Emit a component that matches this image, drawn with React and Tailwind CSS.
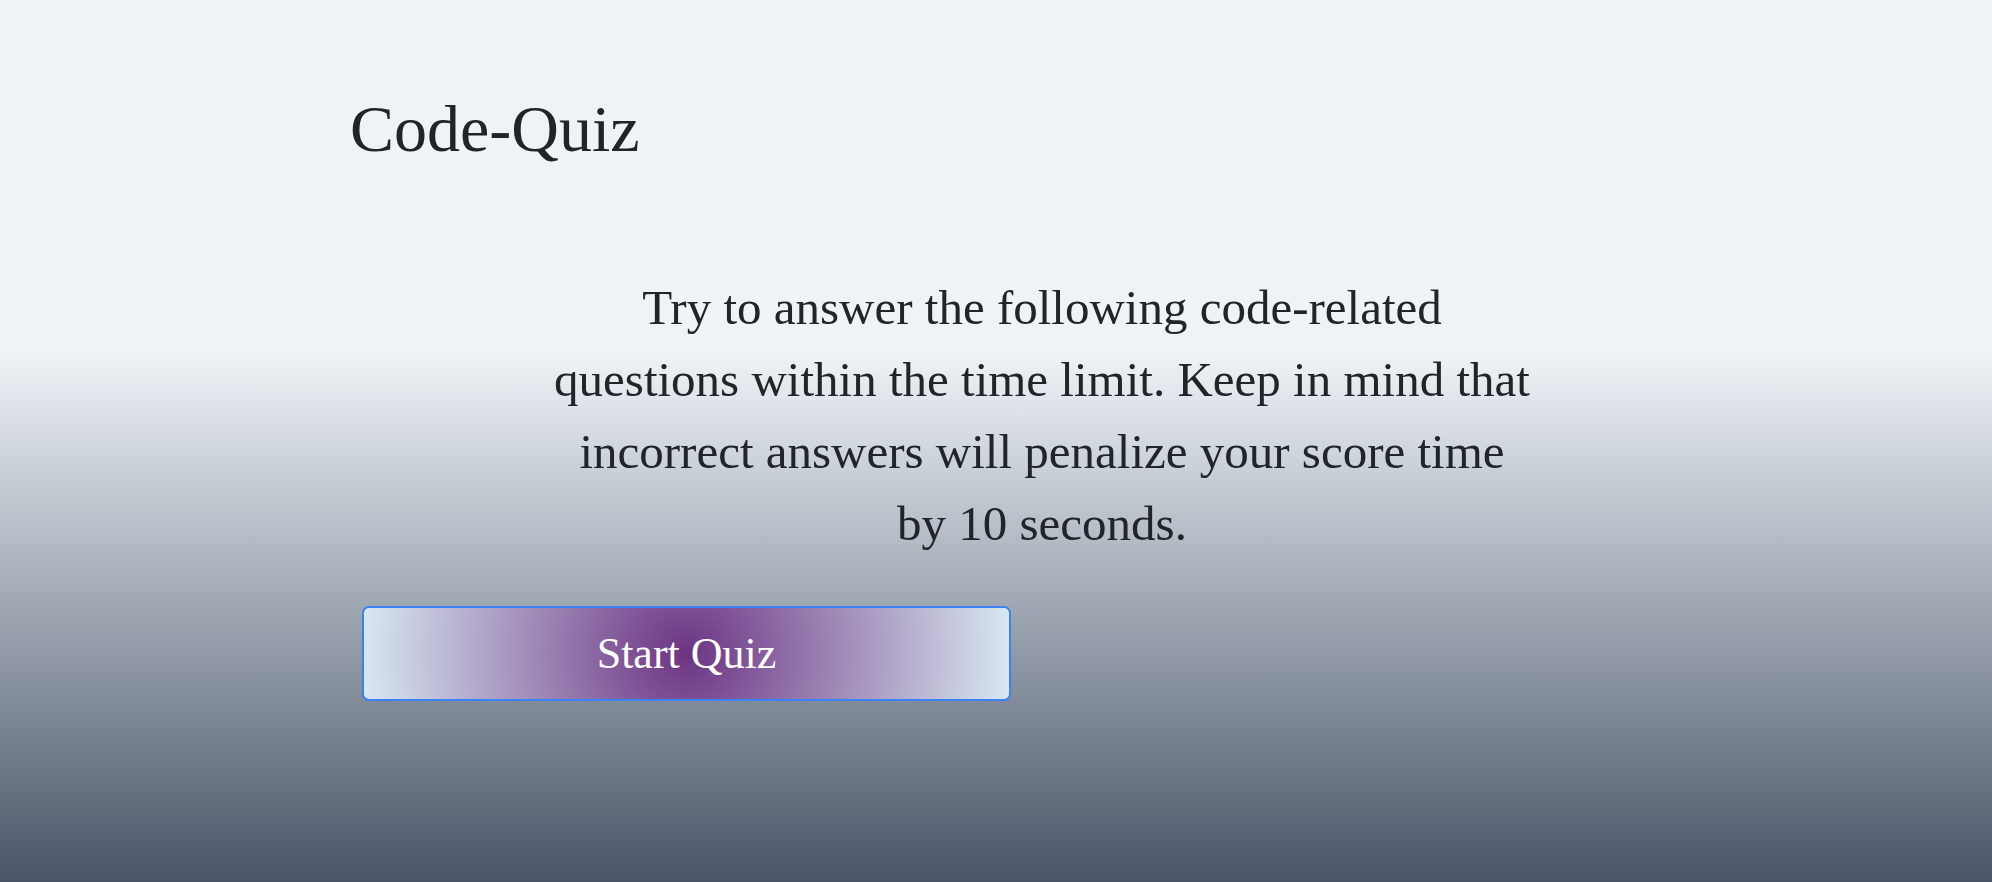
export default function App() {
  return (
    <div className="min-h-screen w-full bg-[linear-gradient(to_bottom,#eef3f7_40%,#4a5568_100%)] font-['Liberation_Serif',serif] text-[#212529]">
      <div className="pl-[350px] pr-[258px] pt-[96px] pb-10">
        <h1 className="text-[66px] leading-none font-normal">Code-Quiz</h1>
        <p className="mt-[110px] text-center text-[49px] leading-[72px]">
          Try to answer the following code-related
          <br />
          questions within the time limit. Keep in mind that
          <br />
          incorrect answers will penalize your score time
          <br />
          by 10 seconds.
        </p>
        <button
          type="button"
          className="mt-[46px] ml-[12px] flex h-[95px] w-[649px] items-center justify-center rounded-[7px] border-2 border-[#3b82f6] bg-[radial-gradient(circle,#6c3483,#d8e8f1)] text-[44px] leading-none text-white"
        >
          Start Quiz
        </button>
      </div>
    </div>
  );
}
